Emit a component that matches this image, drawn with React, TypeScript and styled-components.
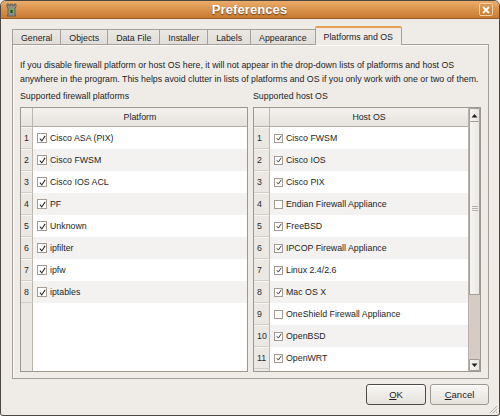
import styled, { createGlobalStyle } from 'styled-components';

const GlobalStyle = createGlobalStyle`
	html, body { margin: 0; padding: 0; background: #efebe7; }
	body { font-family: "Liberation Sans", Arial, sans-serif; font-size: 8.8px; color: #1e1e1e; }
	* { box-sizing: border-box; }
`;

const Window = styled.div`
	width: 500px;
	height: 416px;
	display: flex;
	flex-direction: column;
	background: #efebe7;
	border: 1px solid #4e4640;
	border-radius: 6px 6px 3px 3px;
	overflow: hidden;
	position: relative;
`;

const TitleBar = styled.div`
	height: 18px;
	flex: none;
	display: grid;
	grid-template-columns: 1fr auto 1fr;
	align-items: center;
	padding: 0 6px 0 5px;
	background: linear-gradient(#eaad6c, #d88f48 55%, #c77b34);
	border-bottom: 1px solid #9a5e25;
`;

const Title = styled.div`
	font-size: 13px;
	font-weight: bold;
	color: #fff;
	text-shadow: 0 1px 1px rgba(60, 30, 0, 0.7);
	letter-spacing: 0.1px;
`;

const CloseButton = styled.div`
	justify-self: end;
	width: 14px;
	height: 13px;
	border: 1px solid #f3cfa6;
	border-radius: 2px;
	background: linear-gradient(#dc9a55, #c97f38);
	display: flex;
	align-items: center;
	justify-content: center;
`;

const Body = styled.div`
	flex: 1;
	display: flex;
	flex-direction: column;
	padding: 7px 10px 10px 11px;
	min-height: 0;
`;

const TabBar = styled.div`
	height: 19px;
	flex: none;
	display: flex;
	align-items: flex-end;
	position: relative;
	z-index: 1;
	margin-bottom: -1px;
`;

const Tab = styled.div<{ $active?: boolean }>`
	height: ${p => (p.$active ? 19 : 16)}px;
	padding: 0 8px;
	display: flex;
	align-items: center;
	white-space: nowrap;
	border: 1px solid #a6a098;
	border-bottom: ${p => (p.$active ? 'none' : '1px solid #a6a098')};
	margin-left: -1px;
	background: ${p => (p.$active ? '#efebe7' : 'linear-gradient(#ebe8e4, #e1ddd8)')};
	border-top: ${p => (p.$active ? '2px solid #e89f55' : '1px solid #a6a098')};
	border-radius: ${p => (p.$active ? '2px 2px 0 0' : '0')};
	padding-top: ${p => (p.$active ? 0 : 1)}px;
	&:first-child { margin-left: 0; }
`;

const Panel = styled.div`
	flex: 1;
	display: flex;
	flex-direction: column;
	border: 1px solid #a6a098;
	box-shadow: inset 1px 1px 0 #fbfaf9;
	padding: 13px 7px 6px 7px;
	min-height: 0;
`;

const Description = styled.p`
	margin: 0;
	line-height: 14px;
	white-space: nowrap;
`;

const Columns = styled.div`
	flex: 1;
	display: grid;
	grid-template-columns: 1fr 1fr;
	grid-template-rows: 100%;
	column-gap: 5px;
	margin-top: 3px;
	min-height: 0;
`;

const Column = styled.div`
	display: flex;
	flex-direction: column;
	min-height: 0;
	min-width: 0;
`;

const SectionLabel = styled.div`
	height: 14px;
	line-height: 14px;
	margin-bottom: 4px;
	flex: none;
`;

const TableFrame = styled.div`
	flex: 1;
	display: flex;
	border: 1px solid #9d978f;
	background: #fff;
	min-height: 0;
	overflow: hidden;
`;

const TableView = styled.div`
	flex: 1;
	display: flex;
	flex-direction: column;
	min-width: 0;
	min-height: 0;
`;

const HeaderRow = styled.div`
	height: 19px;
	flex: none;
	display: flex;
	background: linear-gradient(#f4f2ef, #e6e2dd);
	border-bottom: 1px solid #b3ada6;
`;

const Corner = styled.div<{ $w: number }>`
	width: ${p => p.$w}px;
	flex: none;
	border-right: 1px solid #bcb6ae;
`;

const HeaderCell = styled.div`
	flex: 1;
	display: flex;
	align-items: center;
	justify-content: center;
`;

const BodyArea = styled.div<{ $w: number }>`
	flex: 1;
	min-height: 0;
	overflow: hidden;
	background: linear-gradient(
		to right,
		#ebe8e4 ${p => p.$w - 1}px,
		#bcb6ae ${p => p.$w - 1}px ${p => p.$w}px,
		#fff ${p => p.$w}px
	);
`;

const Row = styled.div<{ $alt: boolean }>`
	height: 22px;
	display: flex;
	background: ${p => (p.$alt ? '#f3f2f0' : '#fff')};
`;

const RowHeader = styled.div<{ $w: number }>`
	width: ${p => p.$w}px;
	flex: none;
	display: flex;
	align-items: center;
	padding-left: 3px;
	background: #ebe8e4;
	border-right: 1px solid #bcb6ae;
	border-bottom: 1px solid #d3cec7;
	box-shadow: inset 0 1px 0 #f8f7f5;
	color: #2a2a2a;
`;

const Cell = styled.div`
	flex: 1;
	display: flex;
	align-items: center;
	gap: 3px;
	padding-left: 4px;
	white-space: nowrap;
`;

const Box = styled.span<{ $size: number }>`
	width: ${p => p.$size}px;
	height: ${p => p.$size}px;
	flex: none;
	border: 1px solid #a29c95;
	background: #fff;
	display: flex;
	align-items: center;
	justify-content: center;
`;

const Scrollbar = styled.div`
	width: 12px;
	flex: none;
	display: flex;
	flex-direction: column;
	border-left: 1px solid #b7b1aa;
	background: #d5cdc3;
`;

const ArrowButton = styled.div<{ $h: number }>`
	height: ${p => p.$h}px;
	flex: none;
	display: flex;
	align-items: center;
	justify-content: center;
	background: linear-gradient(to right, #f7f6f4, #e7e3de);
	border: 1px solid #a49e96;
	border-radius: 1px;
`;

const Slider = styled.div`
	height: 173px;
	flex: none;
	background: linear-gradient(to right, #f6f5f3, #ebe8e4);
	border: 1px solid #a49e96;
	border-top: none;
	display: flex;
	flex-direction: column;
	align-items: center;
	justify-content: center;
	gap: 1px;
`;

const Grip = styled.span`
	width: 6px;
	height: 1px;
	background: #b9b2aa;
`;

const Trough = styled.div`
	flex: 1;
`;

const ButtonRow = styled.div`
	display: flex;
	flex: none;
	justify-content: flex-end;
	gap: 4px;
	margin-top: 5px;
`;

const Button = styled.div<{ $default?: boolean }>`
	width: ${p => (p.$default ? 60 : 59)}px;
	height: 21px;
	display: flex;
	align-items: center;
	justify-content: center;
	font-size: 9.5px;
	border: 1px solid ${p => (p.$default ? '#4f4a45' : '#9d978f')};
	border-radius: 3px;
	background: linear-gradient(#f8f7f5, #e6e2dc);
	box-shadow: inset 0 1px 0 #fff;
	u { text-decoration: underline; text-underline-offset: 1px; }
`;

const ResizeGrip = styled.svg`
	position: absolute;
	right: 1px;
	bottom: 1px;
`;

type Item = { name: string; on: boolean };

const platforms: Item[] = [
	{ name: 'Cisco ASA (PIX)', on: true },
	{ name: 'Cisco FWSM', on: true },
	{ name: 'Cisco IOS ACL', on: true },
	{ name: 'PF', on: true },
	{ name: 'Unknown', on: true },
	{ name: 'ipfilter', on: true },
	{ name: 'ipfw', on: true },
	{ name: 'iptables', on: true },
];

const hostOS: Item[] = [
	{ name: 'Cisco FWSM', on: true },
	{ name: 'Cisco IOS', on: true },
	{ name: 'Cisco PIX', on: true },
	{ name: 'Endian Firewall Appliance', on: false },
	{ name: 'FreeBSD', on: true },
	{ name: 'IPCOP Firewall Appliance', on: true },
	{ name: 'Linux 2.4/2.6', on: true },
	{ name: 'Mac OS X', on: true },
	{ name: 'OneShield Firewall Appliance', on: false },
	{ name: 'OpenBSD', on: true },
	{ name: 'OpenWRT', on: true },
];

const tabs = ['General', 'Objects', 'Data File', 'Installer', 'Labels', 'Appearance', 'Platforms and OS'];

function CheckBox(props: { on: boolean; size: number }) {
	return (
		<Box $size={props.size}>
			{props.on && (
				<svg width={props.size - 3} height={props.size - 3} viewBox="0 0 8 8">
					<path d="M1 4.2 L3.2 6.8 L7 1" fill="none" stroke="#2a2a2a" strokeWidth="1.2" />
				</svg>
			)}
		</Box>
	);
}

function ListTable(props: { title: string; items: Item[]; rh: number; box: number; scroll?: boolean }) {
	return (
		<TableFrame>
			<TableView>
				<HeaderRow>
					<Corner $w={props.rh} />
					<HeaderCell>{props.title}</HeaderCell>
				</HeaderRow>
				<BodyArea $w={props.rh}>
					{props.items.map((it, i) => (
						<Row key={i} $alt={i % 2 === 1}>
							<RowHeader $w={props.rh}>{i + 1}</RowHeader>
							<Cell>
								<CheckBox on={it.on} size={props.box} />
								{it.name}
							</Cell>
						</Row>
					))}
				</BodyArea>
			</TableView>
			{props.scroll && (
				<Scrollbar>
					<ArrowButton $h={14}>
						<svg width="7" height="5" viewBox="0 0 7 5">
							<path d="M0.5 4.5 L3.5 1 L6.5 4.5 Z" fill="#222" />
						</svg>
					</ArrowButton>
					<Slider>
						<Grip />
						<Grip />
						<Grip />
					</Slider>
					<Trough />
					<ArrowButton $h={12}>
						<svg width="7" height="5" viewBox="0 0 7 5">
							<path d="M0.5 0.5 L3.5 4 L6.5 0.5 Z" fill="#222" />
						</svg>
					</ArrowButton>
				</Scrollbar>
			)}
		</TableFrame>
	);
}

function TowerIcon() {
	return (
		<svg width="11" height="14" viewBox="0 0 11 14">
			<path d="M1 1 H3 V2.5 H4.5 V1 H6.5 V2.5 H8 V1 H10 V4 L9 5 V12 L10 13 H1 L2 12 V5 L1 4 Z" fill="#8c8f8a" stroke="#4b4e49" strokeWidth="0.7" />
			<rect x="3" y="6" width="5" height="4" fill="#5fbf3a" opacity="0.9" />
			<rect x="4.5" y="7" width="2" height="3" fill="#2c3a26" />
		</svg>
	);
}

export default function App() {
	return (
		<>
			<GlobalStyle />
			<Window>
				<TitleBar>
					<TowerIcon />
					<Title>Preferences</Title>
					<CloseButton>
						<svg width="8" height="8" viewBox="0 0 8 8">
							<path d="M1 1 L7 7 M7 1 L1 7" stroke="#fff" strokeWidth="1.8" />
						</svg>
					</CloseButton>
				</TitleBar>
				<Body>
					<TabBar>
						{tabs.map((t, i) => (
							<Tab key={t} $active={i === tabs.length - 1}>{t}</Tab>
						))}
					</TabBar>
					<Panel>
						<Description>
							If you disable firewall platform or host OS here, it will not appear in the drop-down lists of platforms and host OS
							<br />
							anywhere in the program. This helps avoid clutter in lists of platforms and OS if you only work with one or two of them.
						</Description>
						<Columns>
							<Column>
								<SectionLabel>Supported firewall platforms</SectionLabel>
								<ListTable title="Platform" items={platforms} rh={12} box={10} />
							</Column>
							<Column>
								<SectionLabel>Supported host OS</SectionLabel>
								<ListTable title="Host OS" items={hostOS} rh={16} box={9} scroll />
							</Column>
						</Columns>
					</Panel>
					<ButtonRow>
						<Button $default><u>O</u>K</Button>
						<Button><u>C</u>ancel</Button>
					</ButtonRow>
				</Body>
				<ResizeGrip width="10" height="10" viewBox="0 0 10 10">
					<path d="M9 2 L2 9 M9 5 L5 9 M9 8 L8 9" stroke="#b5afa8" strokeWidth="1" />
				</ResizeGrip>
			</Window>
		</>
	);
}
